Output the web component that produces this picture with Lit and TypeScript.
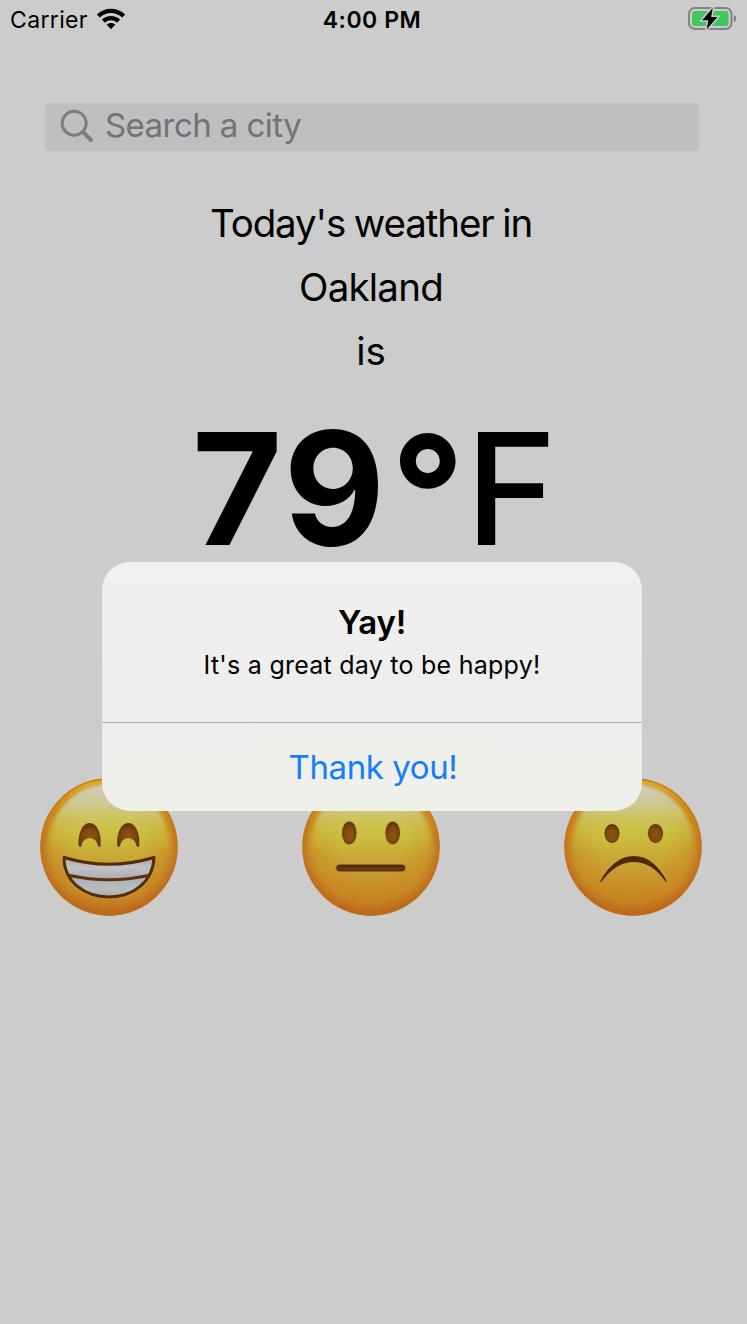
import { LitElement, html, css, svg } from "lit";
import { customElement, property } from "lit/decorators.js";

@customElement("mood-face")
class MoodFace extends LitElement {
  @property() mood = "neutral";

  static styles = css`
    :host { display: block; width: 140px; height: 140px; }
    .face { display: block; width: 140px; height: 140px; overflow: visible; }
  `;

  private features() {
    if (this.mood === "happy") {
      return svg`
        <path d="M39.8 76 C38.5 65 43 53 50.7 53 C58.5 53 63 65 61.6 76 C61 77.3 59.6 77.3 59 76 C57.5 65.5 43.9 65.5 42.4 76 C41.8 77.3 40.4 77.3 39.8 76Z" fill="url(#eye)" stroke="#c9bd38" stroke-width="1.4" paint-order="stroke"/>
        <path d="M78.4 76 C77.1 65 81.6 53 89.3 53 C97.1 53 101.6 65 100.2 76 C99.6 77.3 98.2 77.3 97.6 76 C96.1 65.5 82.5 65.5 81 76 C80.4 77.3 79 77.3 78.4 76Z" fill="url(#eye)" stroke="#c9bd38" stroke-width="1.4" paint-order="stroke"/>
        <path d="M25 87.5 Q70 101 115 87.5 C114 112 94 127 70 127 C46 127 25 112 25 87.5Z" fill="none" stroke="#c0a030" stroke-width="4.4" stroke-linejoin="round"/>
        <path d="M25 87.5 Q70 101 115 87.5 C114 112 94 127 70 127 C46 127 25 112 25 87.5Z" fill="url(#teeth)" stroke="#542c07" stroke-width="3" stroke-linejoin="round"/>
        <path d="M30.5 105.5 Q70 114 109.5 105.5" fill="none" stroke="#5b320e" stroke-width="3.2"/>`;
    }
    if (this.mood === "sad") {
      return svg`<g transform="translate(1 0)">
        <ellipse cx="48" cy="63.5" rx="8" ry="10" fill="url(#eye)" stroke="#c9bd38" stroke-width="1"/>
        <ellipse cx="91.5" cy="63.5" rx="8" ry="10" fill="url(#eye)" stroke="#c9bd38" stroke-width="1"/>
        <path d="M36.8 111.5 C54 78.5 86 78.5 102.2 111.5 C84 84.5 56 84.5 36.8 111.5Z" fill="#502707" stroke="#bba638" stroke-width="3" stroke-linejoin="round"/>
        <path d="M36.8 111.5 C54 78.5 86 78.5 102.2 111.5 C84 84.5 56 84.5 36.8 111.5Z" fill="#502707" stroke="#502707" stroke-width="1.3" stroke-linejoin="round"/></g>`;
    }
    return svg`
      <ellipse cx="48.3" cy="63" rx="7.8" ry="12" fill="url(#eye)" stroke="#c9bd38" stroke-width="1"/>
      <ellipse cx="91.7" cy="63" rx="7.8" ry="12" fill="url(#eye)" stroke="#c9bd38" stroke-width="1"/>
      <rect x="34.5" y="94" width="70.5" height="8" rx="4" fill="#65360b" stroke="#bf9b35" stroke-width="1"/>
      <path d="M38 96H101.5" stroke="#502707" stroke-width="2" stroke-linecap="round"/>`;
  }

  render() {
    return html`<svg class="face" viewBox="0 0 140 140" role="img" aria-label=${this.mood}>
      <defs>
        <linearGradient id="skin" x1="0" y1="0" x2="0" y2="1">
          <stop offset="0" stop-color="#d8b41e"/><stop offset=".2" stop-color="#cfba2c"/><stop offset=".42" stop-color="#c9bb35"/>
          <stop offset=".62" stop-color="#caa236"/><stop offset=".82" stop-color="#c98c28"/><stop offset="1" stop-color="#b66b1b"/>
        </linearGradient>
        <radialGradient id="edge" cx=".5" cy=".47" r=".53">
          <stop offset=".45" stop-color="#c98a24" stop-opacity="0"/><stop offset=".8" stop-color="#c98522" stop-opacity=".55"/>
          <stop offset="1" stop-color="#b9631a" stop-opacity=".95"/>
        </radialGradient>
        <linearGradient id="rim" x1="0" y1="0" x2="0" y2="1">
          <stop offset="0" stop-color="#d8ac1c"/><stop offset=".2" stop-color="#d08a1e"/><stop offset=".45" stop-color="#c5761c" stop-opacity=".5"/>
          <stop offset=".7" stop-color="#c5761c" stop-opacity="0"/>
        </linearGradient>
        <linearGradient id="shine" x1="0" y1="0" x2="0" y2="1">
          <stop offset="0" stop-color="#cfcdbc"/><stop offset=".17" stop-color="#cecb9c" stop-opacity=".9"/>
          <stop offset=".36" stop-color="#cbc655" stop-opacity=".6"/><stop offset=".58" stop-color="#c9be3c" stop-opacity="0"/>
        </linearGradient>
        <filter id="soft" x="-10%" y="-10%" width="120%" height="120%"><feGaussianBlur stdDeviation="1.4"/></filter>
        <radialGradient id="eye" cx=".5" cy=".58" r=".5">
          <stop offset="0" stop-color="#8c5412"/><stop offset=".6" stop-color="#804a10"/><stop offset="1" stop-color="#62370d"/>
        </radialGradient>
        <linearGradient id="teeth" x1="0" y1="0" x2="0" y2="1">
          <stop offset="0" stop-color="#a9acb0"/><stop offset=".25" stop-color="#c0c3c6"/><stop offset=".5" stop-color="#adb0b3"/>
          <stop offset=".8" stop-color="#b9bcbe"/><stop offset="1" stop-color="#a7aaad"/>
        </linearGradient>
      </defs>
      <circle cx="70" cy="70" r="68.5" fill="url(#skin)"/>
      <circle cx="70" cy="70" r="68.5" fill="url(#edge)"/>
      <circle cx="70" cy="70" r="66" fill="none" stroke="url(#rim)" stroke-width="5"/>
      <ellipse cx="70" cy="67.5" rx="59" ry="60.5" fill="url(#shine)" filter="url(#soft)"/>
      <circle cx="70" cy="70" r="68" fill="none" stroke="#c4701a" stroke-opacity=".75" stroke-width="1.4"/>
      <g transform="translate(0 -7)">${this.features()}</g>
    </svg>`;
  }
}

@customElement("app-root")
class AppRoot extends LitElement {
  static styles = css`
    :host {
      display: flex; flex-direction: column; position: relative; box-sizing: border-box;
      width: 747px; height: 1324px; overflow: hidden; background: #ccc; color: #000;
      font-family: Inter, "Liberation Sans", sans-serif; white-space: nowrap;
    }
    .status { display: grid; grid-template-columns: 1fr auto 1fr; align-items: center; height: 40px; padding: 0 10px; flex: none; }
    .left { display: flex; align-items: center; gap: 8.5px; }
    .carrier { font-size: 23px; letter-spacing: 0.35px; }
    .wifi { width: 30px; height: 22px; margin-top: -2px; }
    .time { font-size: 23px; font-weight: 600; letter-spacing: 0.55px; margin-left: -3px; }
    .battery { width: 49px; height: 26px; justify-self: end; margin: -5px 0 0; }
    .search {
      display: flex; align-items: center; gap: 11px; flex: none; box-sizing: border-box;
      width: 654px; height: 48px; margin: 63px 0 0 45px; padding: 0 15px; border-radius: 5px;
      background: #bfbfbf; color: #727277; font-size: 33px; letter-spacing: -0.56px;
    }
    .glass { width: 34px; height: 34px; flex: none; margin-top: -2px; }
    .query { line-height: 44px; margin-top: -5px; }
    .report { display: flex; flex-direction: column; align-items: center; width: 742px; margin-top: 40px; }
    .line { font-size: 38.5px; line-height: 64px; }
    .intro { letter-spacing: -1.1px; word-spacing: -1.2px; }
    .city { letter-spacing: -0.8px; }
    .temp { display: flex; align-items: baseline; height: 188px; margin-top: 10px; padding-left: 7px; font-size: 155.4px; line-height: 188px; }
    .value { display: flex; align-items: baseline; font-weight: 700; }
    .tens { letter-spacing: 1px; }
    .ones { letter-spacing: 6px; font-size: 156.5px; }
    .degree { margin-right: 1px; font-size: 160px; transform: translateY(5px); }
    .unit { font-weight: 500; font-size: 155px; }
    .moods { display: flex; justify-content: space-between; width: 664px; margin: 196px 0 0 39px; }
    .alert {
      position: absolute; left: 102px; top: 562px; width: 540px; height: 249px; border-radius: 28px;
      overflow: hidden; display: flex; flex-direction: column; text-align: center;
      background: linear-gradient(#f0f0f0, #ededec 55%, #f0f0eb);
    }
    .message { box-sizing: border-box; height: 161px; padding-top: 40px; border-bottom: 1px solid #adadad; }
    .title { font-size: 33px; line-height: 40px; font-weight: 600; letter-spacing: -0.2px; }
    .body { font-size: 25px; line-height: 32px; margin-top: 7px; letter-spacing: 0.25px; }
    .action {
      flex: 1; border: 0; padding: 0 0 0 2px; background: none; color: #157efb;
      font-family: inherit; font-size: 33px; line-height: 40px; letter-spacing: -0.4px;
    }
  `;

  render() {
    return html`
      <header class="status">
        <div class="left">
          <span class="carrier">Carrier</span>
          <svg class="wifi" viewBox="0 0 30 22">
            <path d="M.8 6.5C8.8-1.1 21.2-1.1 29.2 6.5L26.2 9.6C19.9 3.5 10.1 3.5 3.8 9.6Z"/>
            <path d="M5.8 11.6C11 6.7 19 6.7 24.2 11.6L21.1 14.7C17.6 11.4 12.4 11.4 8.9 14.7Z"/>
            <path d="M10.6 16.6C13.1 14.3 16.9 14.3 19.4 16.6L15 21.2Z"/>
          </svg>
        </div>
        <span class="time">4:00 PM</span>
        <svg class="battery" viewBox="0 0 49 26">
          <rect x="1" y="3" width="42.5" height="21" rx="6" fill="none" stroke="#828282" stroke-width="2"/>
          <path d="M46 10.2C48.7 10.5 48.7 16.5 46 16.8Z" fill="#777"/>
          <rect x="4" y="6" width="36.5" height="15" rx="3" fill="#3cc85d"/>
          <path d="M24.7 3L14.2 15.2H20.4L18.6 24.5L29.4 12H23.2Z" fill="#000" stroke="#ccc" stroke-width="3" paint-order="stroke"/>
        </svg>
      </header>
      <div class="search">
        <svg class="glass" viewBox="0 0 34 34" fill="none" stroke="#7e7e7e" stroke-linecap="round">
          <circle cx="14.2" cy="14.2" r="12" stroke-width="3"/>
          <path d="M23 23L31 31" stroke-width="3.9"/>
        </svg>
        <span class="query">Search a city</span>
      </div>
      <main class="report">
        <div class="line intro">Today's weather in</div>
        <div class="line city">Oakland</div>
        <div class="line">is</div>
        <div class="temp"><span class="value"><span class="tens">7</span><span class="ones">9</span><span class="degree">°</span></span><span class="unit">F</span></div>
      </main>
      <div class="moods">
        <mood-face mood="happy"></mood-face>
        <mood-face mood="neutral"></mood-face>
        <mood-face mood="sad"></mood-face>
      </div>
      <section class="alert" role="alertdialog">
        <div class="message">
          <div class="title">Yay!</div>
          <div class="body">It's a great day to be happy!</div>
        </div>
        <button class="action">Thank you!</button>
      </section>
    `;
  }
}
